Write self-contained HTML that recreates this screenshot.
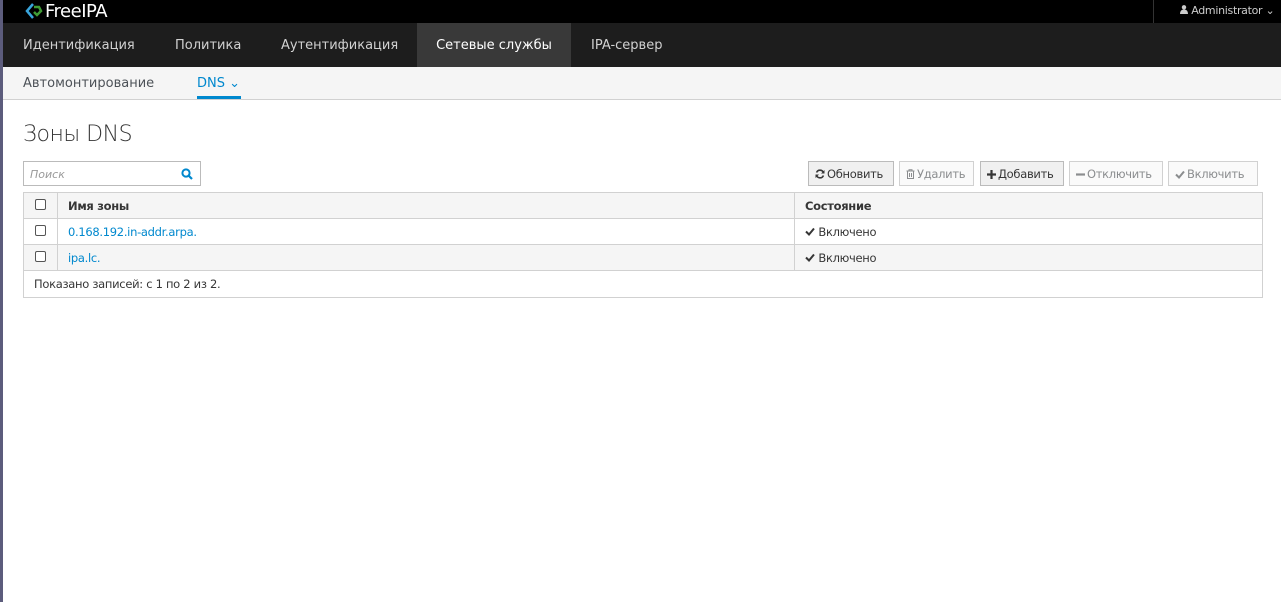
<!DOCTYPE html><html><head><meta charset="utf-8"><style>
*{box-sizing:border-box;margin:0;padding:0}
body{width:1281px;height:602px;overflow:hidden;background:#fff;font-family:"DejaVu Sans",sans-serif;position:relative;color:#363636}
.strip{position:absolute;left:0;top:0;width:3px;height:602px;background:#5c5c7c}
.top{position:absolute;left:3px;top:0;right:0;height:23px;background:#000}
.logo{position:absolute;left:22px;top:1px;color:#fff;font-size:18px;letter-spacing:-0.5px}
.user{position:absolute;left:1150px;top:0;height:23px;border-left:1px solid #333;padding-left:26px;color:#ccc;font-size:11px;line-height:22px;width:131px;white-space:nowrap;letter-spacing:-0.3px}
.nav{position:absolute;left:3px;top:23px;right:0;height:44px;background:#1d1d1d}
.nav span{position:absolute;top:0;height:44px;line-height:46px;color:#d1d1d1;font-size:13px;white-space:nowrap}
.nav .act{background:#393939;color:#fff;text-align:center}
.sub{position:absolute;left:3px;top:67px;right:0;height:33px;background:#f5f5f5;border-bottom:1px solid #d1d1d1}
.sub span{position:absolute;top:0;height:32px;line-height:33px;font-size:13px;color:#4d5258;white-space:nowrap}
h1{position:absolute;left:23px;top:122px;font-size:22px;font-weight:300;color:#363636;letter-spacing:-0.5px}
.search{position:absolute;left:23px;top:161px;width:178px;height:25px;border:1px solid #bbb;font-size:11px;font-style:italic;color:#999;padding:6px 6px}
.btn{position:absolute;top:161px;height:25px;border:1px solid #d1d1d1;background:#fafafa;font-size:11.5px;line-height:25px;padding:0 6px;color:#8b8d8f;letter-spacing:-0.3px;white-space:nowrap;overflow:hidden}
.btn.on{color:#363636;border-color:#bbb;background:#f0f0f0}
.btn svg{vertical-align:-1px;margin-right:2px}
table{position:absolute;left:23px;top:192px;width:1240px;border-collapse:collapse;font-size:11.5px;letter-spacing:-0.3px}
td{border:1px solid #d1d1d1;height:26px;padding:0 10px}
tr.h td{background:#f5f5f5;font-weight:600}
tr.g td{background:#f5f5f5}
.cb{width:11px;height:11px;border:1px solid #555;border-radius:2px;display:inline-block;background:#fff}
a{color:#0088ce;text-decoration:none}
</style></head><body>
<div class="strip"></div>
<div class="top"><div class="logo"><svg width="20" height="18" viewBox="0 0 20 18" style="vertical-align:-3px"><path d="M8 2 L2 9 L8 16" stroke="#39a5dc" stroke-width="2.5" fill="none"/><path d="M9 5 L14 5 L16 9 L12 13 L9 10" stroke="#3f9c35" stroke-width="2.5" fill="none"/></svg>FreeIPA</div>
<div class="user"><svg width="8" height="9" viewBox="0 0 8 9"><circle cx="4" cy="2.3" r="2.2" fill="#ccc"/><path d="M0 9 Q0 4.5 4 4.5 Q8 4.5 8 9Z" fill="#ccc"/></svg> Administrator ⌄</div></div>
<div class="nav">
<span style="left:20px">Идентификация</span><span style="left:172px">Политика</span><span style="left:278px">Аутентификация</span>
<span class="act" style="left:414px;width:154px">Сетевые службы</span><span style="left:588px">IPA-сервер</span></div>
<div class="sub"><span style="left:20px">Автомонтирование</span><span style="left:194px;color:#0088ce;border-bottom:3px solid #0088ce;padding-right:1px">DNS ⌄</span></div>
<h1>Зоны DNS</h1>
<div class="search">Поиск<svg style="position:absolute;right:7px;top:6px" width="12" height="12" viewBox="0 0 12 12"><circle cx="5" cy="5" r="3.6" stroke="#0088ce" stroke-width="2" fill="none"/><path d="M7.5 7.5 L11 11" stroke="#0088ce" stroke-width="2.2"/></svg></div>
<div class="btn on" style="left:808px;width:86px"><svg width="10" height="10" viewBox="0 0 10 10"><path d="M8.5 4 A3.6 3.6 0 0 0 1.6 3.5 M1.5 6 A3.6 3.6 0 0 0 8.4 6.5" stroke="#363636" stroke-width="1.6" fill="none"/><path d="M9.5 1 V4.5 H6Z M0.5 9 V5.5 H4Z" fill="#363636"/></svg>Обновить</div>
<div class="btn" style="left:899px;width:75px"><svg width="9" height="10" viewBox="0 0 9 10"><path d="M0.5 2 H8.5 M3 2 V0.8 H6 V2 M1.5 2 V9.5 H7.5 V2 M3.5 4 V8 M5.5 4 V8" stroke="#8b8d8f" stroke-width="1" fill="none"/></svg>Удалить</div>
<div class="btn on" style="left:980px;width:84px"><svg width="9" height="9" viewBox="0 0 9 9"><path d="M4.5 0 V9 M0 4.5 H9" stroke="#363636" stroke-width="2.2"/></svg>Добавить</div>
<div class="btn" style="left:1069px;width:94px"><svg width="9" height="9" viewBox="0 0 9 9"><path d="M0 4.5 H9" stroke="#8b8d8f" stroke-width="2.2"/></svg>Отключить</div>
<div class="btn" style="left:1168px;width:90px"><svg width="10" height="9" viewBox="0 0 10 9"><path d="M1 4.5 L4 7.5 L9 1.5" stroke="#8b8d8f" stroke-width="2" fill="none"/></svg>Включить</div>
<table>
<tr class="h"><td style="width:34px;text-align:center"><span class="cb"></span></td><td style="width:737px">Имя зоны</td><td>Состояние</td></tr>
<tr><td style="text-align:center"><span class="cb"></span></td><td><a>0.168.192.in-addr.arpa.</a></td><td><svg width="10" height="9" viewBox="0 0 10 9"><path d="M1 4.5 L4 7.5 L9 1.5" stroke="#363636" stroke-width="2" fill="none"/></svg> Включено</td></tr>
<tr class="g"><td style="text-align:center"><span class="cb"></span></td><td><a>ipa.lc.</a></td><td><svg width="10" height="9" viewBox="0 0 10 9"><path d="M1 4.5 L4 7.5 L9 1.5" stroke="#363636" stroke-width="2" fill="none"/></svg> Включено</td></tr>
<tr><td colspan="3" style="height:27px">Показано записей: с 1 по 2 из 2.</td></tr>
</table>
</body></html>
